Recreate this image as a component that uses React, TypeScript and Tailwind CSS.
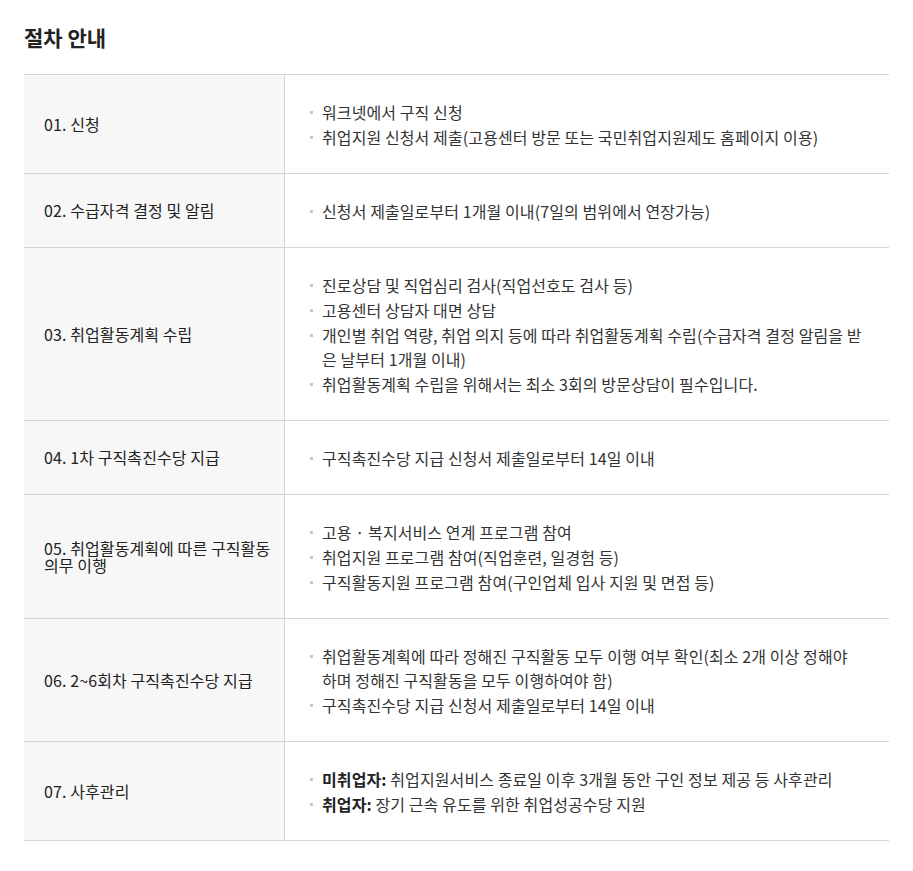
const steps: { title: string; items: { bold?: string; text: string }[] }[] = [
  {
    title: "01. 신청",
    items: [
      { text: "워크넷에서 구직 신청" },
      { text: "취업지원 신청서 제출(고용센터 방문 또는 국민취업지원제도 홈페이지 이용)" },
    ],
  },
  {
    title: "02. 수급자격 결정 및 알림",
    items: [{ text: "신청서 제출일로부터 1개월 이내(7일의 범위에서 연장가능)" }],
  },
  {
    title: "03. 취업활동계획 수립",
    items: [
      { text: "진로상담 및 직업심리 검사(직업선호도 검사 등)" },
      { text: "고용센터 상담자 대면 상담" },
      {
        text: "개인별 취업 역량, 취업 의지 등에 따라 취업활동계획 수립(수급자격 결정 알림을 받은 날부터 1개월 이내)",
      },
      { text: "취업활동계획 수립을 위해서는 최소 3회의 방문상담이 필수입니다." },
    ],
  },
  {
    title: "04. 1차 구직촉진수당 지급",
    items: [{ text: "구직촉진수당 지급 신청서 제출일로부터 14일 이내" }],
  },
  {
    title: "05. 취업활동계획에 따른 구직활동 의무 이행",
    items: [
      { text: "고용 · 복지서비스 연계 프로그램 참여" },
      { text: "취업지원 프로그램 참여(직업훈련, 일경험 등)" },
      { text: "구직활동지원 프로그램 참여(구인업체 입사 지원 및 면접 등)" },
    ],
  },
  {
    title: "06. 2~6회차 구직촉진수당 지급",
    items: [
      {
        text: "취업활동계획에 따라 정해진 구직활동 모두 이행 여부 확인(최소 2개 이상 정해야 하며 정해진 구직활동을 모두 이행하여야 함)",
      },
      { text: "구직촉진수당 지급 신청서 제출일로부터 14일 이내" },
    ],
  },
  {
    title: "07. 사후관리",
    items: [
      { bold: "미취업자:", text: " 취업지원서비스 종료일 이후 3개월 동안 구인 정보 제공 등 사후관리" },
      { bold: "취업자:", text: " 장기 근속 유도를 위한 취업성공수당 지원" },
    ],
  },
];

export default function App() {
  return (
    <div className="min-h-screen bg-white px-6 pt-[22px] pb-8 font-['Noto_Sans_CJK_KR','Noto_Sans',sans-serif] text-[#222]">
      <h2 className="mb-[22px] text-[21px] font-semibold leading-[30px] text-[#222]">
        절차 안내
      </h2>

      <div className="border-t border-[#d5d5d5]">
        {steps.map((step) => (
          <div
            key={step.title}
            className="grid grid-cols-[261px_1fr] border-b border-[#d5d5d5]"
          >
            <div className="flex items-center border-r border-[#d5d5d5] bg-[#f7f7f7] pl-5 pr-3">
              <p className="text-[16px] leading-[17px] tracking-[0.1px]">
                {step.title}
              </p>
            </div>
            <ul className="flex flex-col gap-[1px] pt-[25px] pr-6 pb-6 pl-[25px]">
              {step.items.map((item, i) => (
                <li
                  key={i}
                  className="relative pl-3 text-[16px] leading-6 tracking-[0.1px] text-[#333]"
                >
                  <span className="absolute left-0 top-[11px] size-[3px] bg-[#c8c8c8]" />
                  {item.bold && <b className="font-bold text-[#222]">{item.bold}</b>}
                  {item.text}
                </li>
              ))}
            </ul>
          </div>
        ))}
      </div>
    </div>
  );
}
